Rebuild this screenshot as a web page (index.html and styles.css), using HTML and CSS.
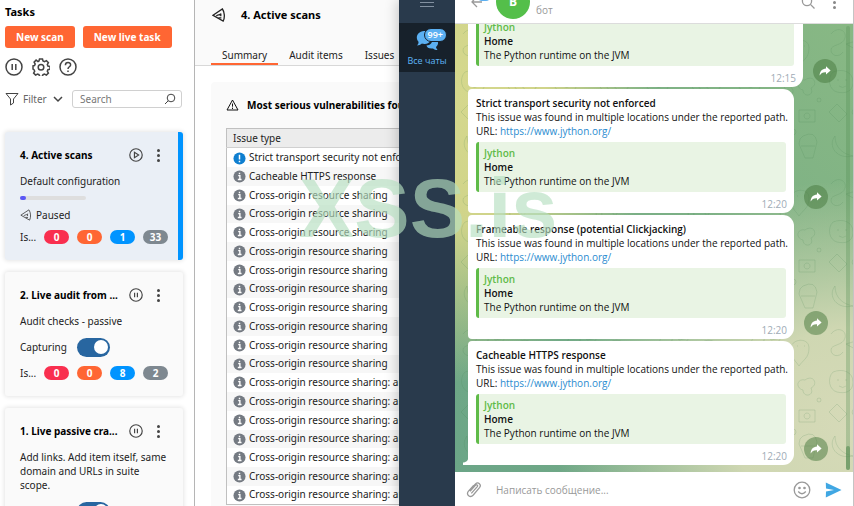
FILE: index.html
```html
<!DOCTYPE html>
<html lang="en">
<head>
  <meta charset="UTF-8" />
  <title>Active scans</title>
  <meta name="viewport" content="width=device-width, initial-scale=1.0" />
  <link rel="stylesheet" href="styles.css">
</head>
<body>
  <!-- shared icons -->
  <svg class="defs" width="0" height="0" aria-hidden="true">
    <symbol id="pause" viewBox="0 0 18 18">
      <circle cx="9" cy="9" r="8" />
      <path d="M7.2 6v6M10.8 6v6" />
    </symbol>
    <symbol id="play" viewBox="0 0 18 18">
      <circle cx="9" cy="9" r="8" />
      <path d="M7 5.6v6.8L12.4 9z" />
    </symbol>
    <symbol id="scan" viewBox="0 0 14 14">
      <path d="M1 7.2 10.4 1C12.6 4 13 9.6 11.2 13z" />
      <path d="M4.4 8.2c1.4-2.4 3-.2 4.4-2.600M8.800 5.600v2.600M6.400 9.800h3" />
    </symbol>
    <symbol id="info" viewBox="0 0 14 14">
      <circle cx="7" cy="7" r="6.500" />
      <path d="M5.600 6h1.800v4M5.200 10.300h4M7 3v1.600" fill="none" stroke="#fff" stroke-width="1.500" />
    </symbol>
    <symbol id="forward" viewBox="0 0 12 12">
      <path d="M7 1.200 11.600 5.400 7 9.600V7.200C4 7 2 8 .6 10.600.8 6.600 3 3.900 7 3.600z" />
    </symbol>
    <pattern id="doodles" width="92" height="150" patternUnits="userSpaceOnUse">
      <path d="M8 10c6-8 16-4 14 4s-14 6-14 12 8 8 12 2M34 6l6 10 10-2-6 8 5 9-10-3-7 7v-10l-9-5 10-3zM60 22c4-8 18-8 18 2s-6 12-10 18c-4-6-10-10-8-20zM66 22h1M73 22h1M10 48c10-4 20 0 20 10s-8 12-16 10-10-14-4-20zM14 56h2M22 56h2M16 62q4 3 7 0M44 50l14 20M48 46l14 20M44 50q0-5 4-4M58 70q5 0 4-4M74 56c8-6 14 4 6 8 4 8-8 10-8 2-8-2-6-12 2-10zM6 88l8-8 10 10-8 8zM32 84c10-8 22-2 22 8H34c-6 0-6-6-2-8zM40 92v14h6V92M68 86h16v12H68zM76 89a3 3 0 1 0 .1 0M12 112c-8 10 2 24 18 20-10-2-18-8-18-20zM48 118l3 6 7 1-5 5 1 7-6-3-6 3 1-7-5-5 7-1zM72 112q12-6 14 6l-4 16h-8l-6-14q0-6 4-8zM70 122h14" />
      <circle cx="52" cy="40" r="3" /><circle cx="88" cy="76" r="2" /><circle cx="62" cy="108" r="3" /><circle cx="34" cy="74" r="2" />
    </pattern>
  </svg>

  <div class="desktop">
    <aside class="tasks">
      <h1>Tasks</h1>
      <div class="actions">
        <button class="primary">New scan</button>
        <button class="primary">New live task</button>
      </div>
      <div class="tools">
        <button class="icon-btn" aria-label="Pause all"><svg width="18" height="18"><use href="#pause" /></svg></button>
        <button class="icon-btn" aria-label="Settings">
          <svg width="18" height="18" viewBox="0 0 18 18">
            <path d="M7.500 1h3l.5 2 1.500.7 1.900-1.100 2 2-1.100 1.900.6 1.500 2.100.5v2.600l-2.100.6-.6 1.500 1.100 1.900-2 2-1.900-1.100-1.500.6-.5 1.900h-3L7 16.600l-1.500-.6-1.900 1.100-2-2 1.100-1.900-.7-1.500L1 11V7.900l1.500-.4.7-1.500-1.100-1.900 2-2L6 3.500 7 3z" />
            <circle cx="9" cy="9.300" r="2.800" />
          </svg>
        </button>
        <button class="icon-btn" aria-label="Help">
          <svg width="18" height="18" viewBox="0 0 18 18">
            <circle cx="9" cy="9" r="8" />
            <path d="M6.400 7.200c0-3.600 5.400-3.400 5.200-.2C11.500 8.800 9 8.800 9 11M9 12.400v1.500" />
          </svg>
        </button>
      </div>
      <div class="filter-row">
        <button class="filter">
          <svg width="14" height="14" viewBox="0 0 14 14"><path d="M1 1.500h12L8.500 7v4l-3 2V7z" /></svg>
          Filter
          <svg class="chevron" width="10" height="8" viewBox="0 0 10 8"><path d="M1 2l4 4 4-4" /></svg>
        </button>
        <label class="search">
          <input type="text" placeholder="Search" aria-label="Search tasks" />
          <svg width="12" height="12" viewBox="0 0 12 12"><circle cx="7" cy="5" r="3.800" /><path d="M4.200 7.800 1 11" /></svg>
        </label>
      </div>

      <section class="card selected">
        <div class="card-head">
          <h2>4. Active scans</h2>
          <button class="icon-btn" aria-label="Resume"><svg width="14" height="14"><use href="#play" /></svg></button>
          <button class="dots" aria-label="More"><i></i><i></i><i></i></button>
        </div>
        <p>Default configuration</p>
        <div class="progress"><span></span></div>
        <p class="state"><svg width="12" height="12"><use href="#scan" /></svg>Paused</p>
        <div class="issues"><span class="label">Is...</span><b class="high">0</b><b class="medium">0</b><b class="low">1</b><b class="note">33</b></div>
      </section>

      <section class="card">
        <div class="card-head">
          <h2>2. Live audit from ...</h2>
          <button class="icon-btn" aria-label="Pause"><svg width="14" height="14"><use href="#pause" /></svg></button>
          <button class="dots" aria-label="More"><i></i><i></i><i></i></button>
        </div>
        <p>Audit checks - passive</p>
        <label class="capture">Capturing <input type="checkbox" checked /></label>
        <div class="issues"><span class="label">Is...</span><b class="high">0</b><b class="medium">0</b><b class="low">8</b><b class="note">2</b></div>
      </section>

      <section class="card">
        <div class="card-head">
          <h2>1. Live passive cra...</h2>
          <button class="icon-btn" aria-label="Pause"><svg width="14" height="14"><use href="#pause" /></svg></button>
          <button class="dots" aria-label="More"><i></i><i></i><i></i></button>
        </div>
        <p>Add links. Add item itself, same domain and URLs in suite scope.</p>
        <label class="capture">Capturing <input type="checkbox" checked /></label>
      </section>
    </aside>

    <main class="detail">
      <header class="detail-head">
        <div class="detail-title">
          <svg width="14" height="14"><use href="#scan" /></svg>
          <h2>4. Active scans</h2>
        </div>
        <nav class="tabs">
          <a class="active" href="#summary">Summary</a>
          <a href="#audit">Audit items</a>
          <a href="#issues">Issues</a>
        </nav>
      </header>
      <section class="panel" id="summary">
        <h3>
          <svg width="13" height="12" viewBox="0 0 13 12"><path d="M6.500 1 12 11H1zM6.500 4.500v3.200M6.500 8.600V10" /></svg>
          Most serious vulnerabilities found
        </h3>
        <table class="issue-table">
          <thead><tr><th>Issue type</th></tr></thead>
          <tbody>
            <tr><td><svg class="low" width="13" height="13" viewBox="0 0 14 14"><circle cx="7" cy="7" r="6.500" /><path d="M7 3v5M7 9.300V11" fill="none" stroke="#fff" stroke-width="1.600" /></svg>Strict transport security not enforced</td></tr>
            <tr><td><svg width="13" height="13"><use href="#info" /></svg>Cacheable HTTPS response</td></tr>
            <tr><td><svg width="13" height="13"><use href="#info" /></svg>Cross-origin resource sharing</td></tr>
            <tr><td><svg width="13" height="13"><use href="#info" /></svg>Cross-origin resource sharing</td></tr>
            <tr><td><svg width="13" height="13"><use href="#info" /></svg>Cross-origin resource sharing</td></tr>
            <tr><td><svg width="13" height="13"><use href="#info" /></svg>Cross-origin resource sharing</td></tr>
            <tr><td><svg width="13" height="13"><use href="#info" /></svg>Cross-origin resource sharing</td></tr>
            <tr><td><svg width="13" height="13"><use href="#info" /></svg>Cross-origin resource sharing</td></tr>
            <tr><td><svg width="13" height="13"><use href="#info" /></svg>Cross-origin resource sharing</td></tr>
            <tr><td><svg width="13" height="13"><use href="#info" /></svg>Cross-origin resource sharing</td></tr>
            <tr><td><svg width="13" height="13"><use href="#info" /></svg>Cross-origin resource sharing</td></tr>
            <tr><td><svg width="13" height="13"><use href="#info" /></svg>Cross-origin resource sharing</td></tr>
            <tr><td><svg width="13" height="13"><use href="#info" /></svg>Cross-origin resource sharing: arbitrary origin trusted</td></tr>
            <tr><td><svg width="13" height="13"><use href="#info" /></svg>Cross-origin resource sharing: arbitrary origin trusted</td></tr>
            <tr><td><svg width="13" height="13"><use href="#info" /></svg>Cross-origin resource sharing: arbitrary origin trusted</td></tr>
            <tr><td><svg width="13" height="13"><use href="#info" /></svg>Cross-origin resource sharing: arbitrary origin trusted</td></tr>
            <tr><td><svg width="13" height="13"><use href="#info" /></svg>Cross-origin resource sharing: arbitrary origin trusted</td></tr>
            <tr><td><svg width="13" height="13"><use href="#info" /></svg>Cross-origin resource sharing: arbitrary origin trusted</td></tr>
            <tr><td><svg width="13" height="13"><use href="#info" /></svg>Cross-origin resource sharing: arbitrary origin trusted</td></tr>
          </tbody>
        </table>
      </section>
    </main>

    <div class="messenger" lang="ru">
      <nav class="rail">
        <button class="menu" aria-label="Меню"><svg width="14" height="8" viewBox="0 0 14 8"><path d="M0 2.500h14M0 6.500h14" /></svg></button>
        <a class="folder" href="#chats">
          <span class="folder-icon">
            <svg width="23" height="21" viewBox="0 0 23 21">
              <path d="M16 8c6 0 8 6 4 9 0 1 1 2 1.500 3-2 0-3-.5-4.500-1.500-4 .5-6-1-6.500-3C15 15 17 12 16 8z" />
              <path d="M8 1c10-1 10 12 1 13-1.500 0-2 0-3-.4C4.500 15 3 15.400 1 15.400c1-1 1.600-2 1.500-3.600C-1 8 1 1.500 8 1z" />
            </svg>
            <span class="badge">99+</span>
          </span>
          Все чаты
        </a>
      </nav>

      <section class="chat">
        <header class="chat-head">
          <svg class="back" width="20" height="14" viewBox="0 0 20 14"><path d="M11 8H1M6 2 1 8l5 5" fill="none" stroke="#999" stroke-width="1.300" /><rect x="6" y="-5" width="14" height="12" rx="5" fill="#5bb0f2" stroke="none" /></svg>
          <span class="avatar">B</span>
          <span class="status">бот</span>
          <button class="head-btn" aria-label="Поиск"><svg width="14" height="14" viewBox="0 0 14 14"><circle cx="6" cy="5" r="4.600" /><path d="M9.400 8.400 13.500 12.500" /></svg></button>
          <button class="dots" aria-label="Ещё"><i></i><i></i><i></i></button>
        </header>

        <div class="feed">
          <svg class="wallpaper" width="100%" height="100%"><rect width="100%" height="100%" fill="url(#doodles)" stroke="none" /></svg>
          <div class="messages">
            <div class="message">
              <article class="bubble wide">
                <blockquote><cite>Jython</cite><strong>Home</strong>The Python runtime on the JVM</blockquote>
                <time>12:15</time>
              </article>
              <button class="forward" aria-label="Переслать"><svg width="12" height="12"><use href="#forward" /></svg></button>
            </div>
            <div class="message">
              <article class="bubble">
                <strong>Strict transport security not enforced</strong>
                <p>This issue was found in multiple locations under the reported path.</p>
                <p>URL: <a href="https://www.jython.org/">https://www.jython.org/</a></p>
                <blockquote><cite>Jython</cite><strong>Home</strong>The Python runtime on the JVM</blockquote>
                <time>12:20</time>
              </article>
              <button class="forward" aria-label="Переслать"><svg width="12" height="12"><use href="#forward" /></svg></button>
            </div>
            <div class="message">
              <article class="bubble">
                <strong>Frameable response (potential Clickjacking)</strong>
                <p>This issue was found in multiple locations under the reported path.</p>
                <p>URL: <a href="https://www.jython.org/">https://www.jython.org/</a></p>
                <blockquote><cite>Jython</cite><strong>Home</strong>The Python runtime on the JVM</blockquote>
                <time>12:20</time>
              </article>
              <button class="forward" aria-label="Переслать"><svg width="12" height="12"><use href="#forward" /></svg></button>
            </div>
            <div class="message">
              <article class="bubble last">
                <strong>Cacheable HTTPS response</strong>
                <p>This issue was found in multiple locations under the reported path.</p>
                <p>URL: <a href="https://www.jython.org/">https://www.jython.org/</a></p>
                <blockquote><cite>Jython</cite><strong>Home</strong>The Python runtime on the JVM</blockquote>
                <time>12:20</time>
              </article>
              <button class="forward" aria-label="Переслать"><svg width="12" height="12"><use href="#forward" /></svg></button>
            </div>
          </div>
          <div class="scrollbar"><span></span></div>
        </div>

        <form class="composer">
          <button type="button" aria-label="Прикрепить"><svg width="16" height="18" viewBox="0 0 16 18"><path d="M3.500 9.500 9.500 3c2.600-2.600 6.400.6 4 3.600L7.300 14c-3 3.400-7.700-.2-5-3.600L7.600 4.500M5.300 12.400l6-6.700c1-1.300-.8-2.700-1.900-1.500L4 10.200" /></svg></button>
          <input type="text" placeholder="Написать сообщение..." aria-label="Написать сообщение" />
          <button type="button" aria-label="Эмодзи"><svg width="18" height="18" viewBox="0 0 18 18"><circle cx="9" cy="9" r="7.800" /><path d="M5.200 10.500q3.800 4.500 7.600 0" /><circle cx="6.500" cy="7" r=".7" /><circle cx="11.500" cy="7" r=".7" /></svg></button>
          <button class="send" aria-label="Отправить"><svg width="17" height="16" viewBox="0 0 17 16"><path d="M.8.500 16.500 8 .8 15.500 1 9.600 9 8 1 6.400z" /></svg></button>
        </form>
      </section>
    </div>

    <div class="watermark">XSS.is</div>
  </div>
</body>
</html>
```

FILE: styles.css
```css
* {
  box-sizing: border-box;
}
body, h1, h2, h3, p, blockquote {
  margin: 0;
}
body {
  font-family: "Noto Sans", sans-serif;
  font-size: 10px;
  line-height: 14px;
  color: #222;
}
button {
  font: inherit;
  color: inherit;
  border: none;
  background: none;
  padding: 0;
  cursor: pointer;
}
svg {
  display: block;
  flex: none;
  fill: none;
  stroke: #444;
}
a {
  text-decoration: none;
}
.defs {
  position: absolute;
}
.desktop {
  position: relative;
  display: grid;
  grid-template-columns: 195px 204px minmax(0, 1fr);
  height: 100vh;
  overflow: hidden;
}

/* task list */
.tasks {
  min-height: 0;
  overflow: hidden;
  padding: 5px 11px 0 5px;
  border-right: 1px solid #b5b5b5;
  background: #fff;
}
h1 {
  font-size: 11px;
  line-height: 14px;
  color: #000;
}
.actions {
  display: flex;
  gap: 8px;
  margin-top: 7px;
}
.primary {
  height: 22px;
  padding: 0 11px;
  border-radius: 3px;
  background: #ff6633;
  color: #fff;
  font-weight: bold;
}
.tools {
  display: flex;
  gap: 9px;
  margin-top: 10px;
}
.icon-btn svg {
  stroke-width: 1.5;
}
.filter-row {
  display: flex;
  align-items: center;
  justify-content: space-between;
  margin: 14px 0 24px;
  padding-right: 1px;
}
.filter {
  display: flex;
  align-items: center;
  gap: 4px;
  color: #666;
}
.filter .chevron {
  margin-left: 2px;
  stroke-width: 1.5;
}
.search {
  display: flex;
  align-items: center;
  width: 110px;
  height: 18px;
  padding: 0 5px 0 7px;
  border: 1px solid #d0d0d0;
  border-radius: 3px;
}
.search input {
  flex: 1;
  min-width: 0;
  padding: 0;
  border: none;
  outline: none;
  font: inherit;
}
.search input::placeholder {
  color: #777;
}
.card {
  display: flex;
  flex-direction: column;
  gap: 8px;
  margin-bottom: 12px;
  padding: 14px 15px 16px;
  border-radius: 3px;
  background: #fafafa;
  box-shadow: 0 0 4px 1px rgba(0, 0, 0, 0.1);
}
.card.selected {
  border-right: 5px solid #0094ff;
  padding-right: 10px;
  background: #eaeff6;
}
.card-head {
  display: flex;
  align-items: center;
  height: 18px;
  margin-bottom: 2px;
}
.card-head h2 {
  flex: 1;
  font-size: 10px;
  white-space: nowrap;
  color: #000;
}
.dots {
  display: flex;
  flex-direction: column;
  gap: 2px;
  margin: 0 8px 0 14px;
}
.dots i {
  width: 3px;
  height: 3px;
  border-radius: 50%;
  background: #444;
}
.progress {
  width: 66px;
  height: 4px;
  border-radius: 2px;
  background: #dedede;
}
.progress span {
  display: block;
  width: 6px;
  height: 4px;
  border-radius: 2px;
  background: #5b57f5;
}
.state {
  display: flex;
  align-items: center;
  gap: 4px;
}
.issues {
  display: flex;
  align-items: center;
  gap: 8px;
}
.issues .label {
  width: 16px;
}
.issues b {
  width: 25px;
  height: 14px;
  border-radius: 7px;
  color: #fff;
  text-align: center;
}
.high { background: #f92f4f; }
.medium { background: #ff6633; }
.issues .low { background: #0094ff; }
.note { background: #7e8890; }
.capture {
  display: flex;
  align-items: center;
  gap: 10px;
  height: 22px;
}
.capture input {
  appearance: none;
  width: 33px;
  height: 19px;
  margin: 0;
  padding: 2px;
  border-radius: 10px;
  background: #2866a0;
}
.capture input::before {
  content: "";
  display: block;
  width: 14px;
  height: 14px;
  margin-left: 15px;
  border-radius: 50%;
  background: #fff;
}

/* scan details */
.detail {
  display: flex;
  flex-direction: column;
  min-height: 0;
  overflow: hidden;
  background: #fff;
}
.detail-head {
  padding: 6px 0 0 16px;
  border-bottom: 1px solid #d8d8d8;
  background: #fafafa;
}
.detail-title {
  display: flex;
  align-items: center;
  gap: 15px;
  height: 18px;
  padding-left: 1px;
}
.detail-title svg {
  stroke: #222;
  stroke-width: 1.3;
}
.detail-title h2 {
  font-size: 11px;
  color: #000;
}
.tabs {
  display: flex;
  margin-top: 21px;
}
.tabs a {
  height: 20px;
  padding: 3px 11px 0;
  color: #222;
  white-space: nowrap;
  border-bottom: 2px solid transparent;
}
.tabs .active {
  border-color: #ff6633;
}
.panel {
  flex: 1;
  min-width: 240px;
  margin: 16px 0 0 16px;
  padding: 14px 0 0 15px;
  border-radius: 4px 0 0 0;
  background: #fafafa;
}
.panel h3 {
  display: flex;
  align-items: center;
  gap: 8px;
  height: 18px;
  margin-bottom: 14px;
  font-size: 10px;
  white-space: nowrap;
  color: #000;
}
.panel h3 svg {
  stroke: #111;
}
.issue-table {
  width: 100%;
  border-collapse: collapse;
  border: 1px solid #c0c0c0;
  background: #fff;
}
.issue-table th {
  height: 19px;
  padding: 0 6px;
  border-bottom: 1px solid #d0d0d0;
  background: #ececec;
  font-weight: normal;
  text-align: left;
}
.issue-table tbody tr {
  height: 19px;
}
.issue-table tbody tr:nth-child(4n) {
  height: 18px;
}
.issue-table tbody tr:nth-child(even) {
  background: #f7f7f7;
}
.issue-table td {
  padding: 0 6px;
  white-space: nowrap;
}
.issue-table td svg {
  display: inline-block;
  margin-right: 3px;
  vertical-align: middle;
  fill: #747a82;
  stroke: none;
}
.issue-table td svg.low {
  fill: #0f7fd0;
}

/* messenger window */
.messenger {
  display: flex;
  min-width: 0;
  min-height: 0;
  border-right: 1px solid #c4c4c4;
  box-shadow: -2px 0 12px rgba(0, 0, 0, 0.2);
  font-family: "Open Sans", sans-serif;
  z-index: 1;
}
.rail {
  flex: 0 0 56px;
  background: #293a4c;
}
.menu {
  display: block;
  height: 23px;
  margin: 0 auto;
}
.menu svg {
  margin-bottom: 15px;
  stroke: #8290a0;
}
.folder {
  display: flex;
  flex-direction: column;
  align-items: center;
  gap: 3px;
  height: 49px;
  padding-top: 7px;
  background: #17212b;
  color: #5eb5f7;
  font-size: 9px;
}
.folder-icon {
  position: relative;
}
.folder-icon svg {
  fill: #5bb0f2;
  stroke: none;
}
.badge {
  position: absolute;
  top: -2px;
  left: 8px;
  padding: 0 3px;
  border: 1px solid #17212b;
  border-radius: 7px;
  background: #5bb0f2;
  color: #fff;
  font-size: 9px;
  line-height: 12px;
  font-weight: 600;
}
.chat {
  display: flex;
  flex: 1;
  flex-direction: column;
  min-width: 0;
  background: #fff;
}
.chat-head {
  display: flex;
  align-items: flex-end;
  height: 24px;
  overflow: hidden;
  padding: 0 15px 4px 16px;
  border-bottom: 1px solid #dcdcdc;
}
.back {
  align-self: flex-start;
  margin-top: -6px;
}
.avatar {
  flex: none;
  width: 34px;
  height: 34px;
  margin: 0 6px 0 5px;
  border-radius: 50%;
  background: #54bf4a;
  color: #fff;
  font-size: 12px;
  font-weight: bold;
  line-height: 34px;
  text-align: center;
}
.status {
  flex: 1;
  padding-bottom: 2px;
  color: #999;
}
.head-btn svg {
  stroke: #999;
  stroke-width: 1.3;
}
.chat-head .dots {
  margin: 0 2px 10px 18px;
}
.chat-head .dots i {
  background: #888;
}
.head-btn {
  padding-bottom: 9px;
}
.feed {
  display: flex;
  flex: 1;
  min-height: 0;
  overflow: hidden;
  position: relative;
  background:
    radial-gradient(ellipse 50% 65% at 0% 15%, #d5d88d 0%, #d0d48a 45%, rgba(213, 216, 141, 0) 100%),
    radial-gradient(ellipse 75% 55% at 100% 90%, #d6dab8 0%, #cfd7b2 40%, rgba(216, 219, 184, 0) 100%),
    linear-gradient(to top right, #6ba587, #88b884);
}
.wallpaper {
  position: absolute;
  inset: 0;
}
#doodles {
  fill: none;
  stroke: #3f7a4c;
  stroke-opacity: 0.16;
}
.messages {
  position: relative;
  display: flex;
  flex: 1;
  flex-direction: column;
  justify-content: flex-end;
  gap: 2px;
  min-width: 0;
  padding: 0 0 7px 13px;
}
.message {
  display: flex;
  align-items: flex-end;
  gap: 10px;
}
.bubble {
  display: flex;
  flex-direction: column;
  width: 326px;
  padding: 7px 8px 2px;
  border-radius: 4px 11px 11px 4px;
  background: #fff;
  color: #111;
  white-space: nowrap;
}
.bubble.wide {
  width: 335px;
}
.bubble.last {
  position: relative;
  border-bottom-left-radius: 0;
}
/* speech tail */
.bubble.last::before {
  content: "";
  position: absolute;
  left: -5px;
  bottom: 0;
  width: 5px;
  height: 8px;
  background: radial-gradient(circle at 0 0, transparent 5px, #fff 6px);
}
.bubble strong {
  font-weight: 600;
}
.bubble a {
  color: #2a8cd0;
}
blockquote {
  display: flex;
  flex-direction: column;
  margin: 4px 0 5px;
  padding: 4px 5px;
  border-left: 3px solid #5fbb48;
  border-radius: 3px;
  background: #e9f4e4;
}
.wide blockquote {
  margin-right: 1px;
}
cite {
  color: #5fbb48;
  font-style: normal;
  font-weight: 600;
}
time {
  align-self: flex-end;
  margin-right: -1px;
  color: #a0acb6;
}
.forward {
  display: flex;
  align-items: center;
  justify-content: center;
  width: 24px;
  height: 24px;
  margin-bottom: 4px;
  border-radius: 50%;
  background: rgba(70, 120, 60, 0.5);
}
.forward svg {
  fill: #fff;
  stroke: none;
}
.scrollbar {
  position: relative;
  display: flex;
  align-items: flex-end;
  width: 4px;
  margin: 2px 3px;
  border-radius: 2px;
  background: rgba(80, 140, 80, 0.3);
}
.scrollbar span {
  width: 4px;
  height: 24px;
  border-radius: 2px;
  background: rgba(70, 130, 70, 0.5);
}
.composer {
  display: flex;
  align-items: center;
  gap: 14px;
  height: 34px;
  padding: 2px 11px 0;
}
.composer svg {
  stroke: #999;
  stroke-width: 1.3;
}
.composer input {
  flex: 1;
  min-width: 0;
  padding: 0;
  border: none;
  outline: none;
  font: inherit;
}
.composer input::placeholder {
  color: #999;
}
.composer .send svg {
  fill: #40a7e3;
  stroke: none;
}

.watermark {
  position: absolute;
  z-index: 2;
  top: 167px;
  left: 299px;
  color: rgba(181, 223, 192, 0.65);
  font: bold 83px/84px "Liberation Sans", sans-serif;
  pointer-events: none;
}
```
